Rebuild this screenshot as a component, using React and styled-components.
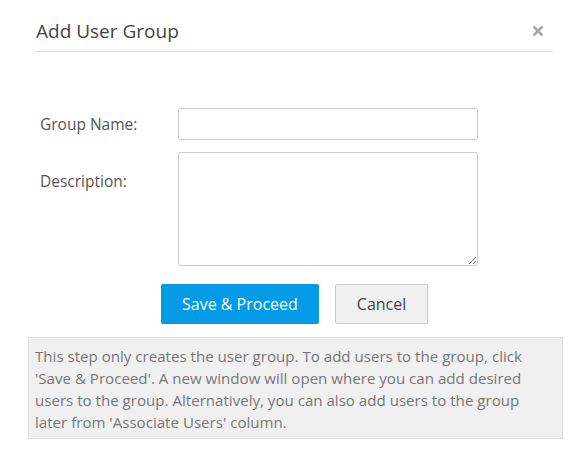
import React from "react";
import styled, { createGlobalStyle } from "styled-components";

const GlobalStyle = createGlobalStyle`
  body {
    margin: 0;
    background: #fff;
    font-family: "Open Sans", "Liberation Sans", sans-serif;
  }
`;

const Dialog = styled.div`
  width: 587px;
  height: 450px;
  box-sizing: border-box;
  padding: 16px 24px 0 28px;
`;

const Header = styled.div`
  display: flex;
  align-items: center;
  justify-content: space-between;
  margin: 0 10px 0 8px;
  padding-bottom: 5px;
  border-bottom: 1px solid #ddd;
`;

const Title = styled.h2`
  margin: 0;
  font-size: 19px;
  font-weight: 400;
  color: #444;
  line-height: 30px;
`;

const Close = styled.button`
  display: flex;
  border: none;
  background: none;
  padding: 0;
  margin-right: 9px;
  color: #aaa;
  cursor: pointer;
`;

const Form = styled.form`
  padding: 56px 0 0 12px;
  display: flex;
  flex-direction: column;
  gap: 12px;
`;

const Row = styled.div`
  display: flex;
  align-items: ${(p) => (p.$top ? "flex-start" : "center")};
`;

const Label = styled.label`
  width: 138px;
  font-size: 15.5px;
  color: #555;
  padding-top: ${(p) => p.$offset || 0}px;
`;

const Input = styled.input`
  width: 300px;
  height: 32px;
  box-sizing: border-box;
  border: 1px solid #ccc;
  border-radius: 3px;
  padding: 4px 8px;
  font-family: inherit;
  font-size: 14px;
  outline: none;
`;

const TextArea = styled.textarea`
  width: 300px;
  height: 114px;
  box-sizing: border-box;
  border: 1px solid #ccc;
  border-radius: 3px;
  padding: 4px 8px;
  font-family: inherit;
  font-size: 14px;
  outline: none;
  resize: both;
`;

const Actions = styled.div`
  display: flex;
  gap: 16px;
  padding-left: 121px;
  margin-top: 6px;
`;

const Button = styled.button`
  height: 40px;
  box-sizing: border-box;
  padding: 0 ${(p) => (p.$primary ? 20 : 21)}px;
  border-radius: 2px;
  font-family: inherit;
  font-size: 16px;
  cursor: pointer;
  border: 1px solid ${(p) => (p.$primary ? "#039be5" : "#ccc")};
  background: ${(p) => (p.$primary ? "#039be5" : "#f0f0f0")};
  color: ${(p) => (p.$primary ? "#fff" : "#444")};
`;

const Note = styled.div`
  margin-top: 13px;
  width: 535px;
  box-sizing: border-box;
  padding: 7px 30px 5px 6px;
  background: #f0f0f0;
  border: 1px solid #ddd;
  font-size: 15.1px;
  line-height: 22px;
  color: #777;
`;

const CloseIcon = () => (
  <svg width="12" height="12" viewBox="0 0 12 12">
    <path d="M1.5 1.5 L10.5 10.5 M10.5 1.5 L1.5 10.5" stroke="currentColor" strokeWidth="2.6" strokeLinecap="butt" />
  </svg>
);

export default function App() {
  return (
    <>
      <GlobalStyle />
      <Dialog>
        <Header>
          <Title>Add User Group</Title>
          <Close type="button" aria-label="Close">
            <CloseIcon />
          </Close>
        </Header>
        <Form onSubmit={(e) => e.preventDefault()}>
          <Row>
            <Label>Group Name:</Label>
            <Input type="text" />
          </Row>
          <Row $top>
            <Label $offset={18}>Description:</Label>
            <TextArea />
          </Row>
          <Actions>
            <Button $primary type="submit">Save &amp; Proceed</Button>
            <Button type="button">Cancel</Button>
          </Actions>
        </Form>
        <Note>
          This step only creates the user group. To add users to the group, click
          'Save &amp; Proceed'. A new window will open where you can add desired
          users to the group. Alternatively, you can also add users to the group
          later from 'Associate Users' column.
        </Note>
      </Dialog>
    </>
  );
}
